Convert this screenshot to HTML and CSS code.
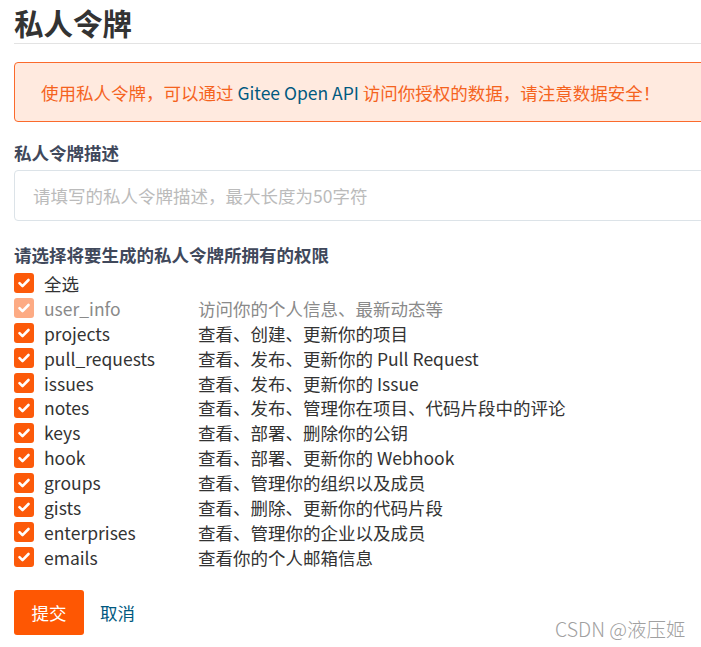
FILE: index.html
```html
<!DOCTYPE html>
<html lang="zh">
<head>
<meta charset="utf-8">
<title>私人令牌</title>
<link rel="stylesheet" href="styles.css">
</head>
<body>
<div class="page">
  <h1 class="title">私人令牌</h1>
  <div class="alert">使用私人令牌，可以通过 <a class="link">Gitee Open API</a> 访问你授权的数据，请注意数据安全！</div>
  <label class="label">私人令牌描述</label>
  <div class="input">请填写的私人令牌描述，最大长度为50字符</div>
  <div class="label label-perm">请选择将要生成的私人令牌所拥有的权限</div>
  <ul class="perms">
    <li class="row"><span class="box"><svg viewBox="0 0 20 20"><path d="M5.5 10.2l3 3 6-6.2"/></svg></span><span class="name">全选</span></li>
    <li class="row disabled"><span class="box"><svg viewBox="0 0 20 20"><path d="M5.5 10.2l3 3 6-6.2"/></svg></span><span class="name">user_info</span><span class="desc">访问你的个人信息、最新动态等</span></li>
    <li class="row"><span class="box"><svg viewBox="0 0 20 20"><path d="M5.5 10.2l3 3 6-6.2"/></svg></span><span class="name">projects</span><span class="desc">查看、创建、更新你的项目</span></li>
    <li class="row"><span class="box"><svg viewBox="0 0 20 20"><path d="M5.5 10.2l3 3 6-6.2"/></svg></span><span class="name">pull_requests</span><span class="desc">查看、发布、更新你的 Pull Request</span></li>
    <li class="row"><span class="box"><svg viewBox="0 0 20 20"><path d="M5.5 10.2l3 3 6-6.2"/></svg></span><span class="name">issues</span><span class="desc">查看、发布、更新你的 Issue</span></li>
    <li class="row"><span class="box"><svg viewBox="0 0 20 20"><path d="M5.5 10.2l3 3 6-6.2"/></svg></span><span class="name">notes</span><span class="desc">查看、发布、管理你在项目、代码片段中的评论</span></li>
    <li class="row"><span class="box"><svg viewBox="0 0 20 20"><path d="M5.5 10.2l3 3 6-6.2"/></svg></span><span class="name">keys</span><span class="desc">查看、部署、删除你的公钥</span></li>
    <li class="row"><span class="box"><svg viewBox="0 0 20 20"><path d="M5.5 10.2l3 3 6-6.2"/></svg></span><span class="name">hook</span><span class="desc">查看、部署、更新你的 Webhook</span></li>
    <li class="row"><span class="box"><svg viewBox="0 0 20 20"><path d="M5.5 10.2l3 3 6-6.2"/></svg></span><span class="name">groups</span><span class="desc">查看、管理你的组织以及成员</span></li>
    <li class="row"><span class="box"><svg viewBox="0 0 20 20"><path d="M5.5 10.2l3 3 6-6.2"/></svg></span><span class="name">gists</span><span class="desc">查看、删除、更新你的代码片段</span></li>
    <li class="row"><span class="box"><svg viewBox="0 0 20 20"><path d="M5.5 10.2l3 3 6-6.2"/></svg></span><span class="name">enterprises</span><span class="desc">查看、管理你的企业以及成员</span></li>
    <li class="row"><span class="box"><svg viewBox="0 0 20 20"><path d="M5.5 10.2l3 3 6-6.2"/></svg></span><span class="name">emails</span><span class="desc">查看你的个人邮箱信息</span></li>
  </ul>
  <div class="actions">
    <button class="btn">提交</button>
    <a class="cancel">取消</a>
  </div>
</div>
<div class="watermark">CSDN @液压姬</div>
</body>
</html>
```

FILE: styles.css
```css
html, body {
  margin: 0;
  padding: 0;
  overflow: hidden;
  background: #fff;
}
body {
  font-family: "Noto Sans CJK SC", "Noto Sans", sans-serif;
  color: #333;
  width: 701px;
  height: 647px;
  position: relative;
}
.page {
  padding-left: 14px;
  width: 700px;
}
.title {
  margin: 0;
  padding-top: 1px;
  font-size: 29.5px;
  line-height: 42px;
  font-weight: 700;
  color: #333;
  border-bottom: 1px solid #e3e3e3;
  height: 44px;
  box-sizing: border-box;
}
.alert {
  margin-top: 18px;
  height: 60px;
  box-sizing: border-box;
  border: 1.5px solid #fb6a2c;
  border-radius: 4px;
  background: #ffeadf;
  color: #f5631e;
  font-size: 17.5px;
  line-height: 59px;
  padding-left: 26px;
  white-space: nowrap;
}
.link {
  color: #005980;
}
.label {
  display: block;
  margin-top: 19px;
  font-size: 17.5px;
  line-height: 24px;
  font-weight: 700;
  color: #40485b;
}
.input {
  margin-top: 5px;
  height: 51px;
  box-sizing: border-box;
  border: 1px solid #dce3e8;
  border-radius: 4px;
  color: #bbbbbb;
  font-size: 17.5px;
  line-height: 50px;
  padding-left: 18px;
}
.label-perm {
  margin-top: 22px;
}
.perms {
  list-style: none;
  margin: 4px 0 0;
  padding: 0;
}
.row {
  display: flex;
  align-items: center;
  height: 24.9px;
  font-size: 17.5px;
  color: #333;
}
.box {
  width: 20px;
  height: 20px;
  border-radius: 3px;
  background: #fc5a0a;
  flex: none;
  display: flex;
  align-items: center;
  justify-content: center;
}
.box svg {
  width: 20px;
  height: 20px;
}
.box path {
  fill: none;
  stroke: #fff;
  stroke-width: 2.6;
  stroke-linecap: round;
  stroke-linejoin: round;
}
.name {
  margin-left: 10px;
  width: 154px;
  flex: none;
}
.disabled .box {
  background: #fdab84;
}
.disabled {
  color: #8a8a8a;
}
.actions {
  margin-top: 20px;
  display: flex;
  align-items: center;
}
.btn {
  width: 70px;
  height: 45px;
  border: none;
  border-radius: 3px;
  background: #fe5703;
  color: #fff;
  font-family: inherit;
  font-size: 17.5px;
  padding: 0;
}
.cancel {
  margin-left: 16px;
  color: #005980;
  font-size: 17.5px;
}
.watermark {
  position: absolute;
  left: 555px;
  top: 614px;
  font-size: 19.5px;
  color: #a0a0a0;
  font-family: "Noto Sans CJK SC", sans-serif;
  font-weight: 300;
}
```
